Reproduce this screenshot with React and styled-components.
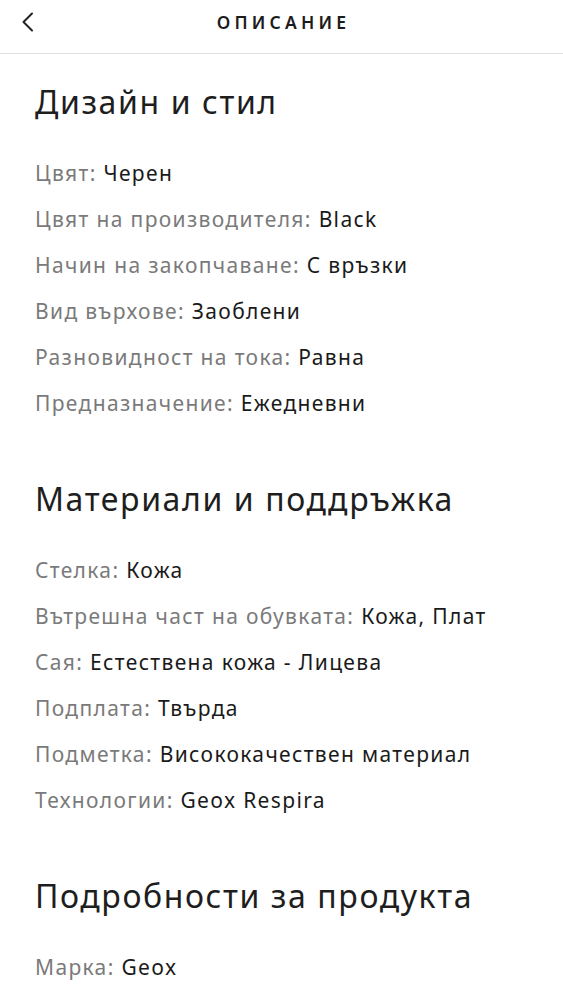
import React from 'react';
import styled, { createGlobalStyle } from 'styled-components';

const GlobalStyle = createGlobalStyle`
	body {
		margin: 0;
		background: #ffffff;
		font-family: "Noto Sans", "DejaVu Sans", sans-serif;
	}
`;

const Page = styled.div`
	width: 100%;
	min-height: 999px;
	background: #ffffff;
`;

const Header = styled.header`
	position: relative;
	display: flex;
	align-items: center;
	justify-content: center;
	height: 53px;
	border-bottom: 1px solid #e2e2e2;
`;

const BackButton = styled.button`
	position: absolute;
	left: 14px;
	top: 10px;
	display: flex;
	align-items: center;
	justify-content: center;
	width: 28px;
	height: 24px;
	padding: 0;
	border: none;
	background: none;
	color: #222;
`;

const Title = styled.h1`
	margin: -8px 0 0 4px;
	font-size: 17.5px;
	font-weight: 600;
	letter-spacing: 4.2px;
	color: #1c1c1c;
	line-height: 1;
`;

const Content = styled.main`
	padding: 28px 35px 0;
`;

const Section = styled.section`
	& + & {
		margin-top: 53px;
	}
`;

const Heading = styled.h2`
	margin: 0 0 28px;
	font-size: 32px;
	font-weight: 400;
	letter-spacing: 1.6px;
	line-height: 40px;
	color: #1e1e1e;
`;

const Row = styled.div`
	font-size: 21px;
	letter-spacing: 1.35px;
	line-height: 46px;
	color: #1a1a1a;
	white-space: nowrap;
`;

const Label = styled.span`
	color: #7a7a7a;
`;

const sections = [
	{
		title: 'Дизайн и стил',
		rows: [
			['Цвят', 'Черен'],
			['Цвят на производителя', 'Black'],
			['Начин на закопчаване', 'С връзки'],
			['Вид върхове', 'Заоблени'],
			['Разновидност на тока', 'Равна'],
			['Предназначение', 'Ежедневни'],
		],
	},
	{
		title: 'Материали и поддръжка',
		rows: [
			['Стелка', 'Кожа'],
			['Вътрешна част на обувката', 'Кожа, Плат'],
			['Сая', 'Естествена кожа - Лицева'],
			['Подплата', 'Твърда'],
			['Подметка', 'Висококачествен материал'],
			['Технологии', 'Geox Respira'],
		],
	},
	{
		title: 'Подробности за продукта',
		rows: [['Марка', 'Geox']],
	},
];

const App = () => {
	return (
		<Page>
			<GlobalStyle />
			<Header>
				<BackButton aria-label='Назад'>
					<svg width='14' height='20' viewBox='0 0 14 20' fill='none'>
						<path d='M11 1.5 L2.5 10 L11 18.5' stroke='currentColor' strokeWidth='2' strokeLinecap='round' strokeLinejoin='round' />
					</svg>
				</BackButton>
				<Title>ОПИСАНИЕ</Title>
			</Header>
			<Content>
				{sections.map(section => (
					<Section key={section.title}>
						<Heading>{section.title}</Heading>
						{section.rows.map(([label, value]) => (
							<Row key={label}>
								<Label>{label}: </Label>
								{value}
							</Row>
						))}
					</Section>
				))}
			</Content>
		</Page>
	);
};

export default App;
